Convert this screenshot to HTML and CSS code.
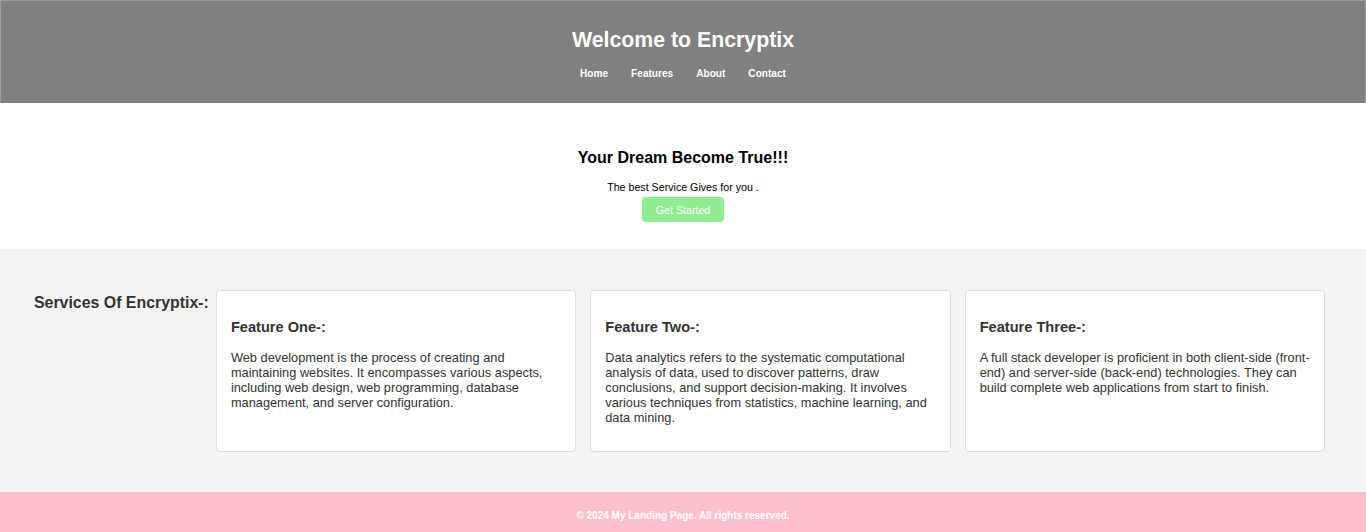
FILE: index.html
```html
<!DOCTYPE html>
<html lang="en">
<head>
<meta charset="UTF-8">
<title>Encryptix</title>
<link rel="stylesheet" href="styles.css">
</head>
<body>
<header class="site-header">
  <h1 class="site-title">Welcome to Encryptix</h1>
  <nav class="nav">
    <a href="#" class="nav-link">Home</a>
    <a href="#" class="nav-link">Features</a>
    <a href="#" class="nav-link">About</a>
    <a href="#" class="nav-link">Contact</a>
  </nav>
</header>
<section class="hero">
  <h2 class="hero-title">Your Dream Become True!!!</h2>
  <p class="hero-text">The best Service Gives for you .</p>
  <a href="#" class="btn">Get Started</a>
</section>
<section class="services">
  <h2 class="services-title">Services Of Encryptix-:</h2>
  <div class="cards">
    <div class="card">
      <h3 class="card-title">Feature One-:</h3>
      <p class="card-text">Web development is the process of creating and maintaining websites. It encompasses various aspects, including web design, web programming, database management, and server configuration.</p>
    </div>
    <div class="card">
      <h3 class="card-title">Feature Two-:</h3>
      <p class="card-text">Data analytics refers to the systematic computational analysis of data, used to discover patterns, draw conclusions, and support decision-making. It involves various techniques from statistics, machine learning, and data mining.</p>
    </div>
    <div class="card">
      <h3 class="card-title">Feature Three-:</h3>
      <p class="card-text">A full stack developer is proficient in both client-side (front-end) and server-side (back-end) technologies. They can build complete web applications from start to finish.</p>
    </div>
  </div>
</section>
<footer class="site-footer">
  <p class="footer-text">© 2024 My Landing Page. All rights reserved.</p>
</footer>
</body>
</html>
```
FILE: styles.css
```css
* {
  box-sizing: border-box;
}

body {
  margin: 0;
  font-family: "Liberation Sans", Arial, sans-serif;
  background: #ffffff;
  color: #333333;
}

.site-header {
  background: #808080;
  border: 1px solid #9c9c9c;
  border-bottom: none;
  height: 103px;
  padding-top: 27px;
  text-align: center;
  color: #ffffff;
}

.site-title {
  margin: 0 0 16px;
  font-size: 21.3px;
  line-height: 24px;
  font-weight: bold;
}

.nav {
  display: flex;
  justify-content: center;
  gap: 23px;
  line-height: 12px;
}

.nav-link {
  color: #ffffff;
  text-decoration: none;
  font-size: 10.1px;
  font-weight: bold;
}

.hero {
  height: 146px;
  padding-top: 45px;
  text-align: center;
  background: #ffffff;
}

.hero-title {
  margin: 0 0 12px;
  font-size: 16px;
  line-height: 20px;
  font-weight: bold;
  color: #000000;
}

.hero-text {
  margin: 0 0 3px;
  font-size: 10.67px;
  line-height: 14px;
  color: #000000;
}

.btn {
  display: inline-block;
  width: 82px;
  height: 25px;
  padding-top: 1px;
  line-height: 24px;
  background: #90ee90;
  color: #ffffff;
  font-size: 10.67px;
  text-decoration: none;
  border-radius: 4px;
}

.services {
  display: flex;
  align-items: flex-start;
  gap: 7px;
  background: #f4f4f4;
  height: 243px;
  padding: 41px 41px 41px 34px;
}

.services-title {
  margin: 4px 0 0;
  font-size: 15.9px;
  line-height: 18px;
  font-weight: bold;
  color: #333333;
  white-space: nowrap;
}

.cards {
  flex: 1;
  display: flex;
  gap: 14px;
  align-items: stretch;
}

.card {
  flex: 1;
  background: #ffffff;
  border: 1px solid #dddddd;
  border-radius: 4px;
  padding: 28px 13px 26px 14px;
}

.card-title {
  margin: 0 0 14px;
  font-size: 14.6px;
  line-height: 17px;
  font-weight: bold;
  color: #333333;
}

.card-text {
  margin: 0;
  font-size: 12.8px;
  line-height: 15px;
  color: #333333;
}

.site-footer {
  background: #ffc0cb;
  height: 40px;
  padding-top: 18px;
  text-align: center;
}

.footer-text {
  margin: 0;
  font-size: 10px;
  line-height: 12px;
  font-weight: bold;
  color: #ffffff;
}
```
